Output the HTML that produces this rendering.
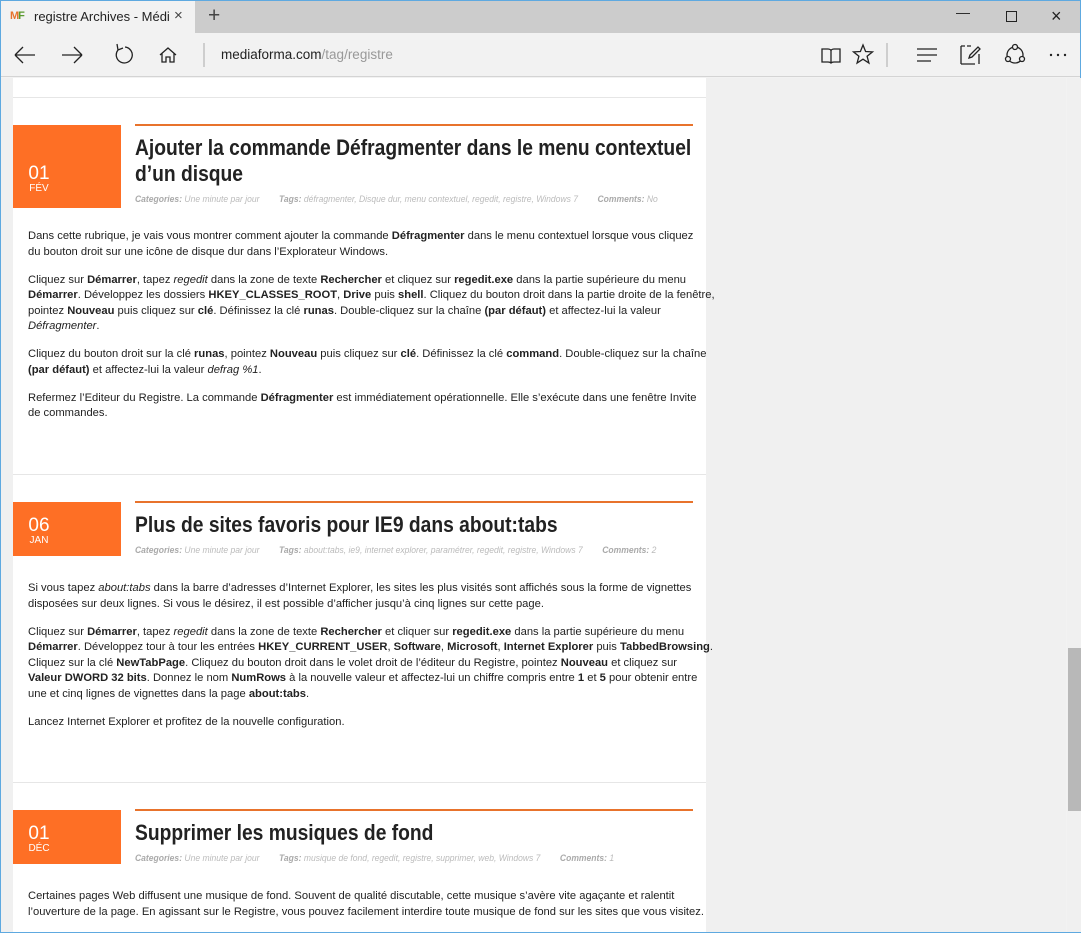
<!DOCTYPE html>
<html><head><meta charset="utf-8"><style>
*{margin:0;padding:0;box-sizing:border-box}
body{width:1081px;height:933px;overflow:hidden;position:relative;background:#f2f2f2;font-family:"Liberation Sans",sans-serif;border:1px solid #5ea9e0}
.abs{position:absolute}
#tabbar{left:0;top:0;width:1079px;height:32px;background:#cccccc}
#tab{left:0;top:0;width:194px;height:32px;background:#f2f2f2}
#nav{left:0;top:32px;width:1079px;height:44px;background:#f2f2f2;border-bottom:1px solid #d4d4d4}
#page{left:0;top:77px;width:1065px;height:854px;background:#f0f0f0}
#col{left:12px;top:77px;width:693px;height:854px;background:#fff}
.sep{position:absolute;left:12px;width:693px;height:1px;background:#e6e6e6}
.oline{position:absolute;left:134px;width:558px;height:2px;background:#e8732c}
.date{position:absolute;left:12px;width:108px;background:#fe6f25;color:#fff;text-align:center;padding-left:0}
.date b{display:block;font-weight:normal;font-size:19px;position:absolute;left:14px;width:24px;text-align:center}
.date i{display:block;font-style:normal;font-size:10px;position:absolute;left:14px;width:24px;text-align:center}
.title{position:absolute;left:134px;font-weight:bold;font-size:22px;color:#222;line-height:26px;white-space:nowrap;transform:scaleX(0.875);transform-origin:0 0}
.meta{position:absolute;left:134px;font-size:9px;font-style:italic;color:#bbb;white-space:nowrap;transform:scaleX(0.95);transform-origin:0 0}
.meta b{color:#aaa;margin-left:18px}
.meta b:first-child{margin-left:0}
.txt{position:absolute;left:27px;font-size:11.2px;color:#222;line-height:15.5px;white-space:nowrap}
.txt p{margin-bottom:12.5px}
</style></head><body>
<div class="abs" id="tabbar"></div>
<div class="abs" id="tab"></div>
<div class="abs" style="left:9px;top:9px;font-size:11px;font-weight:bold;letter-spacing:-1px"><span style="color:#e8732c">M</span><span style="color:#5a9a2e">F</span></div>
<div class="abs" style="left:33px;top:8px;font-size:13px;color:#222">registre Archives - Médi</div>
<div class="abs" style="left:173px;top:6px;font-size:15px;color:#444">×</div>
<div class="abs" style="left:207px;top:3px;font-size:21px;color:#444;font-weight:lighter">+</div>
<div class="abs" style="left:955px;top:3px;font-size:14px;color:#222">—</div>
<div class="abs" style="left:1005px;top:10px;width:11px;height:11px;border:1px solid #222"></div>
<div class="abs" style="left:1050px;top:5px;font-size:18px;color:#222">×</div>
<div class="abs" id="nav"></div>
<svg class="abs" style="left:0;top:32px" width="1079" height="44" fill="none" stroke="#222" stroke-width="1.3">
<path d="M14 22h20M14 22l8-8M14 22l8 8"/>
<path d="M61 22h20M81 22l-8-8M81 22l-8 8"/>
<path d="M124 14a8 8 0 1 1-7 3M116 11l1 6 5-2"/>
<path d="M159 22l8-7 8 7M161 20v9h4v-5h4v5h4v-9"/>
<path d="M203 10v24" stroke="#bbb"/>
<path d="M821 16h6c2 0 3 1 3 2 0-1 1-2 3-2h6v13h-6c-2 0-3 1-3 1 0 0-1-1-3-1h-6zM830 18v12"/>
<path d="M862 12l2.6 6.5 6.9.4-5.4 4.4 1.8 6.7-5.9-3.8-5.9 3.8 1.8-6.7-5.4-4.4 6.9-.4z"/>
<path d="M886 10v24" stroke="#bbb"/>
<path d="M916 16h20M916 22h20M916 28h14"/>
<path d="M960 13h4M966 13h4M960 31h14M960 13v18M978 21v10M968 25l3-1 8-8-2-2-8 8z"/>
<circle cx="1014" cy="22" r="8"/>
<circle cx="1014" cy="14" r="2.5" fill="#f2f2f2"/><circle cx="1007" cy="26" r="2.5" fill="#f2f2f2"/><circle cx="1021" cy="26" r="2.5" fill="#f2f2f2"/>
<g fill="#222" stroke="none"><circle cx="1050" cy="22" r="1.2"/><circle cx="1057" cy="22" r="1.2"/><circle cx="1064" cy="22" r="1.2"/></g>
</svg>
<div class="abs" style="left:220px;top:46px;font-size:13.5px;color:#222">mediaforma.com<span style="color:#999">/tag/registre</span></div>
<div class="abs" id="page"></div>
<div class="abs" style="left:1066px;top:77px;width:14px;height:854px;background:#f0f0f0"></div>
<div class="abs" style="left:1067px;top:647px;width:13px;height:163px;background:#b8b8b8"></div>
<div class="abs" id="col"></div>

<div class="sep" style="top:96px"></div>
<div class="oline" style="top:123px"></div>
<div class="date" style="top:124px;height:83px"><b style="top:38px">01</b><i style="top:58px">FÉV</i></div>
<div class="title" style="top:134px">Ajouter la commande Défragmenter dans le menu contextuel<br>d’un disque</div>
<div class="meta" style="top:193px"><b>Categories:</b> Une minute par jour <b>Tags:</b> défragmenter, Disque dur, menu contextuel, regedit, registre, Windows 7 <b>Comments:</b> No</div>
<div class="txt" style="top:228px">
<p>Dans cette rubrique, je vais vous montrer comment ajouter la commande <b>Défragmenter</b> dans le menu contextuel lorsque vous cliquez<br>du bouton droit sur une icône de disque dur dans l’Explorateur Windows.</p>
<p>Cliquez sur <b>Démarrer</b>, tapez <i>regedit</i> dans la zone de texte <b>Rechercher</b> et cliquez sur <b>regedit.exe</b> dans la partie supérieure du menu<br><b>Démarrer</b>. Développez les dossiers <b>HKEY_CLASSES_ROOT</b>, <b>Drive</b> puis <b>shell</b>. Cliquez du bouton droit dans la partie droite de la fenêtre,<br>pointez <b>Nouveau</b> puis cliquez sur <b>clé</b>. Définissez la clé <b>runas</b>. Double-cliquez sur la chaîne <b>(par défaut)</b> et affectez-lui la valeur<br><i>Défragmenter</i>.</p>
<p>Cliquez du bouton droit sur la clé <b>runas</b>, pointez <b>Nouveau</b> puis cliquez sur <b>clé</b>. Définissez la clé <b>command</b>. Double-cliquez sur la chaîne<br><b>(par défaut)</b> et affectez-lui la valeur <i>defrag %1</i>.</p>
<p>Refermez l’Editeur du Registre. La commande <b>Défragmenter</b> est immédiatement opérationnelle. Elle s’exécute dans une fenêtre Invite<br>de commandes.</p>
</div>

<div class="sep" style="top:473px"></div>
<div class="oline" style="top:500px"></div>
<div class="date" style="top:501px;height:54px"><b style="top:13px">06</b><i style="top:33px">JAN</i></div>
<div class="title" style="top:511px">Plus de sites favoris pour IE9 dans about:tabs</div>
<div class="meta" style="top:544px"><b>Categories:</b> Une minute par jour <b>Tags:</b> about:tabs, ie9, internet explorer, paramétrer, regedit, registre, Windows 7 <b>Comments:</b> 2</div>
<div class="txt" style="top:580px">
<p>Si vous tapez <i>about:tabs</i> dans la barre d’adresses d’Internet Explorer, les sites les plus visités sont affichés sous la forme de vignettes<br>disposées sur deux lignes. Si vous le désirez, il est possible d’afficher jusqu’à cinq lignes sur cette page.</p>
<p>Cliquez sur <b>Démarrer</b>, tapez <i>regedit</i> dans la zone de texte <b>Rechercher</b> et cliquer sur <b>regedit.exe</b> dans la partie supérieure du menu<br><b>Démarrer</b>. Développez tour à tour les entrées <b>HKEY_CURRENT_USER</b>, <b>Software</b>, <b>Microsoft</b>, <b>Internet Explorer</b> puis <b>TabbedBrowsing</b>.<br>Cliquez sur la clé <b>NewTabPage</b>. Cliquez du bouton droit dans le volet droit de l’éditeur du Registre, pointez <b>Nouveau</b> et cliquez sur<br><b>Valeur DWORD 32 bits</b>. Donnez le nom <b>NumRows</b> à la nouvelle valeur et affectez-lui un chiffre compris entre <b>1</b> et <b>5</b> pour obtenir entre<br>une et cinq lignes de vignettes dans la page <b>about:tabs</b>.</p>
<p>Lancez Internet Explorer et profitez de la nouvelle configuration.</p>
</div>

<div class="sep" style="top:781px"></div>
<div class="oline" style="top:808px"></div>
<div class="date" style="top:809px;height:54px"><b style="top:13px">01</b><i style="top:33px">DÉC</i></div>
<div class="title" style="top:819px">Supprimer les musiques de fond</div>
<div class="meta" style="top:852px"><b>Categories:</b> Une minute par jour <b>Tags:</b> musique de fond, regedit, registre, supprimer, web, Windows 7 <b>Comments:</b> 1</div>
<div class="txt" style="top:888px">
<p>Certaines pages Web diffusent une musique de fond. Souvent de qualité discutable, cette musique s’avère vite agaçante et ralentit<br>l’ouverture de la page. En agissant sur le Registre, vous pouvez facilement interdire toute musique de fond sur les sites que vous visitez.</p>
</div>
</body></html>
